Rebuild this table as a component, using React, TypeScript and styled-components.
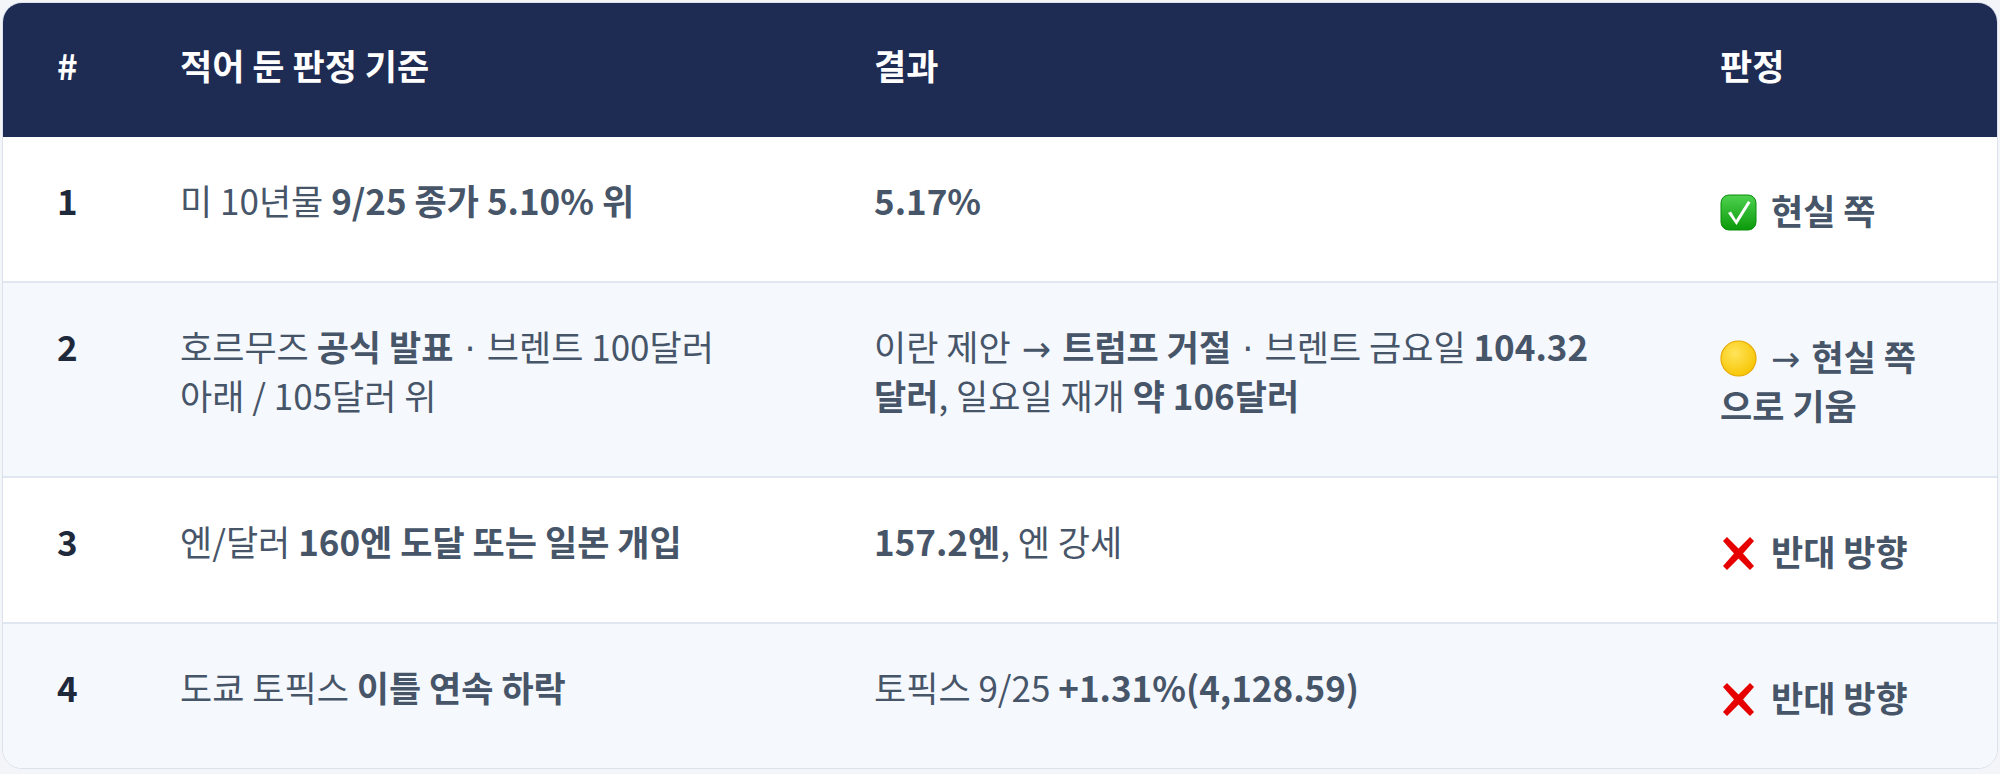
import React from "react";
import styled, { createGlobalStyle } from "styled-components";

const GlobalStyle = createGlobalStyle`
  html, body {
    margin: 0;
    padding: 0;
    background: #f3f5f9;
  }
  body {
    font-family: "Noto Sans CJK KR", "Noto Sans", sans-serif;
    -webkit-font-smoothing: antialiased;
  }
`;

const Page = styled.div`
  padding: 2px;
`;

const Card = styled.div`
  border: 1px solid #dbe2ee;
  border-radius: 20px;
  overflow: hidden;
  background: #ffffff;
`;

const Table = styled.table`
  width: 100%;
  border-collapse: collapse;
  table-layout: fixed;
  font-size: 35px;
  line-height: 49px;
  color: #475569;
`;

const Col = styled.col<{ $w?: number }>`
  width: ${(p) => (p.$w ? `${p.$w}px` : "auto")};
`;

const HeadRow = styled.tr`
  background: #1e2b52;
`;

const HeadCell = styled.th`
  padding: 37px 54px 48px 54px;
  text-align: left;
  font-weight: 700;
  color: #ffffff;
`;

const Row = styled.tr<{ $alt?: boolean }>`
  background: ${(p) => (p.$alt ? "#f5f8fd" : "#ffffff")};
  & + & {
    border-top: 2px solid #e0e7f1;
  }
`;

type CellKind = "num" | "text" | "verdict";

const Cell = styled.td<{ $kind: CellKind }>`
  vertical-align: top;
  padding: ${(p) => (p.$kind === "verdict" ? "48px 60px 47px 54px" : "38px 54px 57px")};
  color: ${(p) => (p.$kind === "num" ? "#1e293b" : "#475569")};
  font-weight: ${(p) => (p.$kind === "text" ? 400 : 700)};
  word-break: ${(p) => (p.$kind === "verdict" ? "normal" : "keep-all")};
`;

const Strong = styled.b`
  font-weight: 700;
`;

/* latin middle dot / arrow, narrower than the CJK full-width forms */
const Sep = styled.span`
  font-family: "DejaVu Sans", "Noto Sans", sans-serif;
  font-weight: 400;
  line-height: 1;
  white-space: pre;
`;

const Mark = styled.svg`
  width: 37px;
  height: 37px;
  vertical-align: -6px;
  margin-right: 14px;
`;

const CheckMark = () => (
  <Mark viewBox="0 0 37 37">
    <defs>
      <linearGradient id="chk" x1="0" y1="0" x2="0" y2="1">
        <stop offset="0" stopColor="#4fd24f" />
        <stop offset="1" stopColor="#0a9a0a" />
      </linearGradient>
    </defs>
    <rect x="1" y="1" width="35" height="35" rx="8" fill="url(#chk)" stroke="#0b8c0b" strokeWidth="1" />
    <path d="M8 19 L11 17.5 L16 26 L28 7 L30.5 8.5 L16.5 31 Z" fill="#ffffff" />
  </Mark>
);

const YellowDot = () => (
  <Mark viewBox="0 0 37 37">
    <defs>
      <radialGradient id="dot" cx="0.4" cy="0.35" r="0.7">
        <stop offset="0" stopColor="#ffe45a" />
        <stop offset="1" stopColor="#f7c400" />
      </radialGradient>
    </defs>
    <circle cx="18.5" cy="18.5" r="17.5" fill="url(#dot)" stroke="#e8a900" strokeWidth="1.2" />
  </Mark>
);

const RedCross = () => (
  <Mark viewBox="0 0 37 37">
    <path
      d="M3 6 L7 2 L18.5 13.5 L30 2 L34 6 L23 18.5 L34 31 L30 35 L18.5 23.5 L7 35 L3 31 L14 18.5 Z"
      fill="#e60000"
    />
  </Mark>
);

export default function App() {
  return (
    <>
      <GlobalStyle />
      <Page>
        <Card>
          <Table>
            <colgroup>
              <Col $w={123} />
              <Col $w={694} />
              <Col $w={846} />
              <Col />
            </colgroup>
            <thead>
              <HeadRow>
                <HeadCell>#</HeadCell>
                <HeadCell>적어 둔 판정 기준</HeadCell>
                <HeadCell>결과</HeadCell>
                <HeadCell>판정</HeadCell>
              </HeadRow>
            </thead>
            <tbody>
              <Row>
                <Cell $kind="num">1</Cell>
                <Cell $kind="text">
                  미 10년물 <Strong>9/25 종가 5.10% 위</Strong>
                </Cell>
                <Cell $kind="text">
                  <Strong>5.17%</Strong>
                </Cell>
                <Cell $kind="verdict">
                  <CheckMark />
                  현실 쪽
                </Cell>
              </Row>
              <Row $alt>
                <Cell $kind="num">2</Cell>
                <Cell $kind="text">
                  호르무즈 <Strong>공식 발표</Strong>
                  <Sep> · </Sep>
                  {"브렌트 100달러 "}
                  {"아래 / 105달러 위"}
                </Cell>
                <Cell $kind="text">
                  이란 제안<Sep> → </Sep>
                  <Strong>트럼프 거절</Strong>
                  <Sep> · </Sep>
                  {"브렌트 금요일 "}
                  <Strong>104.32</Strong> <Strong>달러</Strong>
                  {", 일요일 재개 "}
                  <Strong>약 106달러</Strong>
                </Cell>
                <Cell $kind="verdict">
                  <YellowDot />
                  <Sep>→ </Sep>
                  {"현실 쪽"}
                  {"으로 기움"}
                </Cell>
              </Row>
              <Row>
                <Cell $kind="num">3</Cell>
                <Cell $kind="text">
                  엔/달러 <Strong>160엔 도달 또는 일본 개입</Strong>
                </Cell>
                <Cell $kind="text">
                  <Strong>157.2엔</Strong>, 엔 강세
                </Cell>
                <Cell $kind="verdict">
                  <RedCross />
                  반대 방향
                </Cell>
              </Row>
              <Row $alt>
                <Cell $kind="num">4</Cell>
                <Cell $kind="text">
                  도쿄 토픽스 <Strong>이틀 연속 하락</Strong>
                </Cell>
                <Cell $kind="text">
                  토픽스 9/25 <Strong>+1.31%(4,128.59)</Strong>
                </Cell>
                <Cell $kind="verdict">
                  <RedCross />
                  반대 방향
                </Cell>
              </Row>
            </tbody>
          </Table>
        </Card>
      </Page>
    </>
  );
}
